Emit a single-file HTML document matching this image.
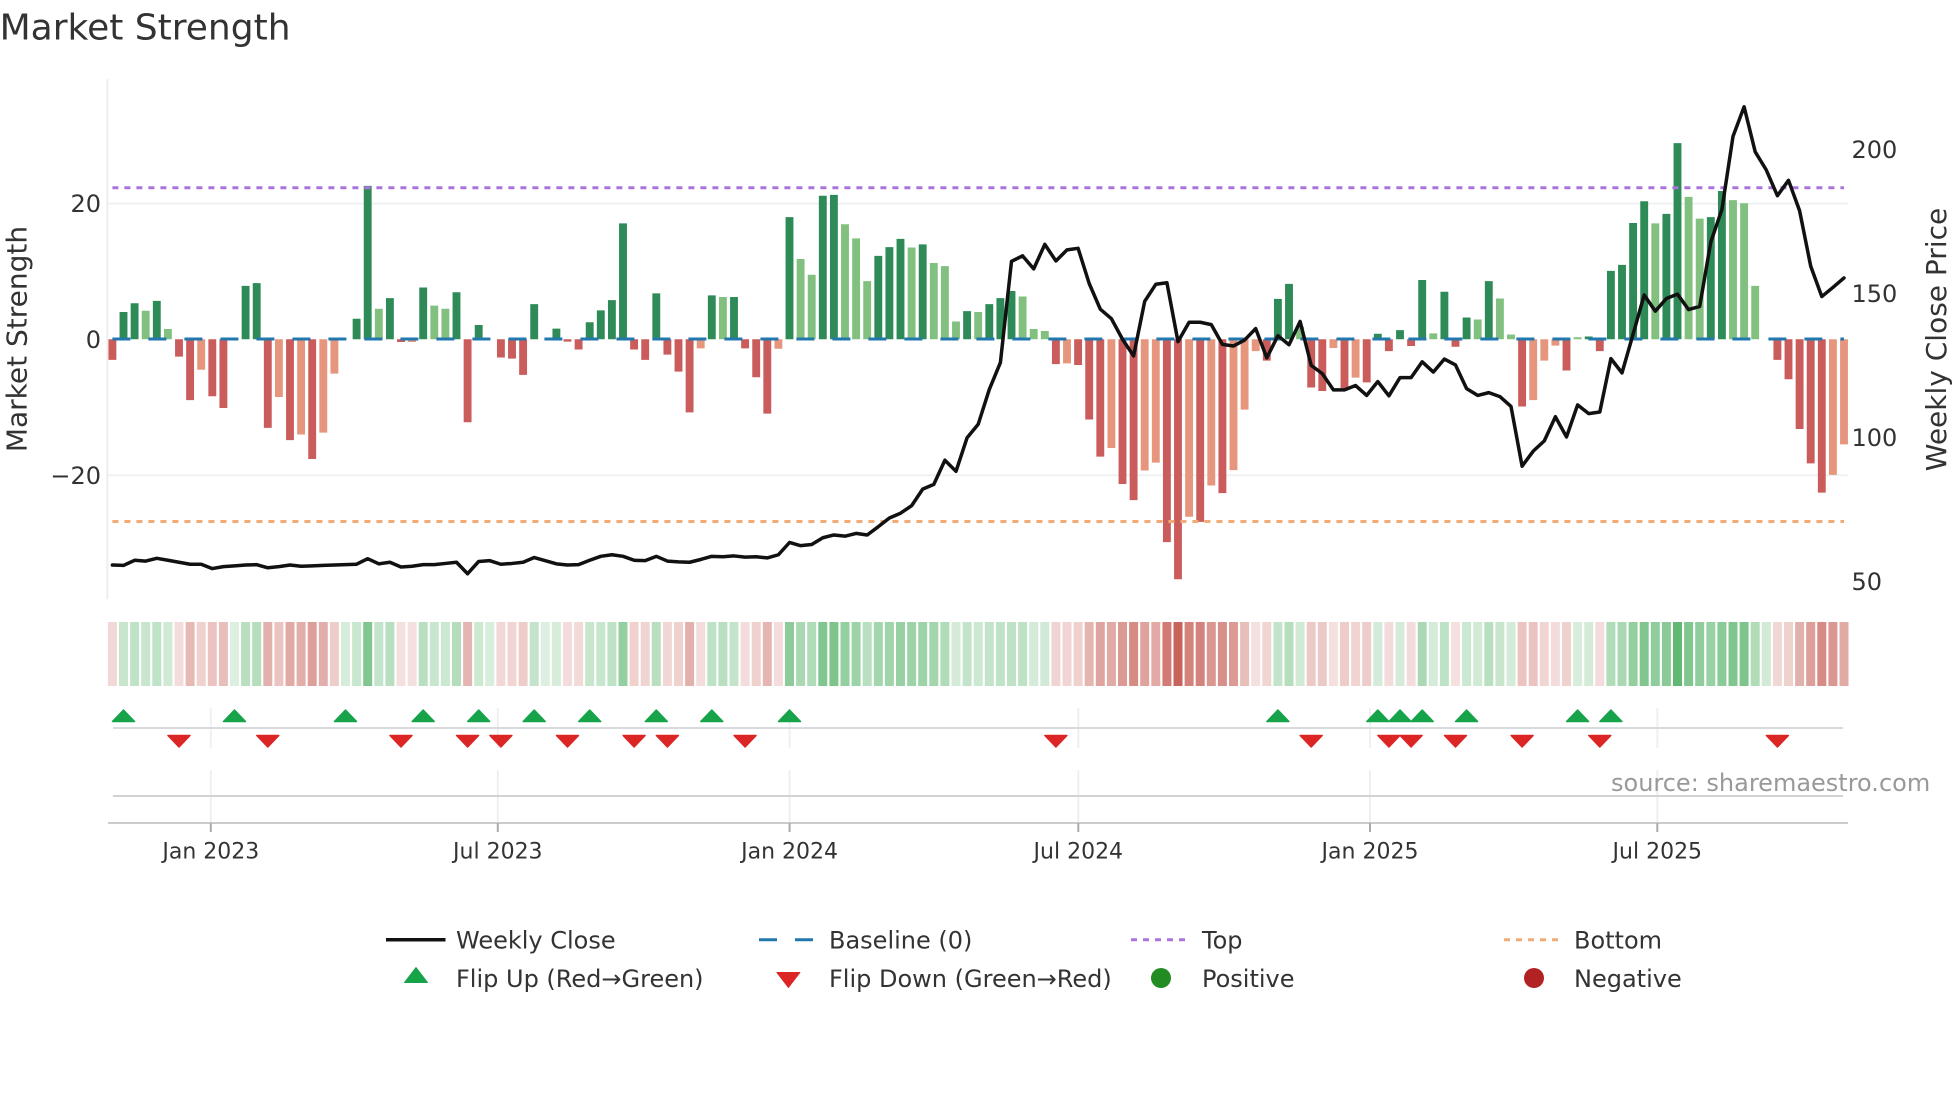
<!DOCTYPE html>
<html>
<head>
<meta charset="utf-8">
<title>Market Strength</title>
<style>
html,body{margin:0;padding:0;background:#fff;width:1960px;height:1102px;overflow:hidden}
svg{display:block}
text{font-family:"DejaVu Sans","Liberation Sans",sans-serif;fill:#333}
</style>
</head>
<body>
<svg width="1960" height="1102" viewBox="0 0 1960 1102" xmlns="http://www.w3.org/2000/svg">
<rect width="1960" height="1102" fill="#fff"/>

<!-- axis and grid -->
<path d="M107.3 79V599" stroke="#eeeeee" stroke-width="2" fill="none"/>
<path d="M107 203.6H1848M107 475.3H1848" stroke="#eff1f2" stroke-width="2" fill="none"/>

<!-- bars -->
<g transform="translate(112.4,0) scale(11.1,0.3954)" fill="none" stroke-width=".71">
<path stroke="#2e8b57" d="M1 858V789M2 858V767M4 858V761M12 858V723M13 858V716M22 858V806M23 858V470M25 858V754M28 858V727M31 858V739M33 858V822M38 858V769M40 858V831M43 858V815M44 858V785M45 858V759M46 858V565M49 858V742M54 858V747M56 858V751M61 858V549M64 858V495M65 858V493M69 858V647M70 858V625M71 858V604M73 858V618M77 858V787M79 858V769M80 858V754M81 858V736M105 858V756M106 858V718M114 858V844M116 858V835M118 858V708M120 858V738M122 858V803M124 858V711M133 858V851M135 858V685M136 858V670M137 858V564M138 858V509M140 858V541M141 858V362M144 858V549M145 858V483"/>
<path stroke="#81c07f" d="M3 858V786M5 858V832M24 858V781M29 858V773M30 858V781M55 858V751M62 858V655M63 858V695M66 858V567M67 858V603M68 858V711M72 858V626M74 858V665M75 858V673M76 858V813M78 858V789M82 858V750M83 858V832M84 858V837M107 858V826M119 858V843M123 858V808M125 858V755M126 858V846M132 858V853M139 858V565M142 858V498M143 858V553M146 858V506M147 858V514M148 858V723"/>
<path stroke="#ca5c5c" d="M0 858V910M6 858V902M7 858V1012M9 858V1002M10 858V1032M14 858V1082M16 858V1113M18 858V1161M26 858V865M32 858V1068M35 858V904M36 858V907M37 858V948M41 858V864M42 858V884M47 858V884M48 858V910M50 858V897M51 858V940M52 858V1043M57 858V881M58 858V954M59 858V1046M85 858V921M87 858V923M88 858V1061M89 858V1155M91 858V1224M92 858V1265M95 858V1371M96 858V1465M98 858V1320M100 858V1247M104 858V912M108 858V980M109 858V989M111 858V982M113 858V967M115 858V888M117 858V875M121 858V877M127 858V1028M131 858V937M134 858V888M150 858V910M151 858V959M152 858V1085M153 858V1172M154 858V1246"/>
<path stroke="#e6967c" d="M8 858V935M15 858V1004M17 858V1099M19 858V1094M20 858V945M27 858V865M53 858V881M60 858V882M86 858V919M90 858V1133M93 858V1190M94 858V1170M97 858V1307M99 858V1228M101 858V1189M102 858V1036M103 858V888M110 858V880M112 858V955M128 858V1012M129 858V912M130 858V874M155 858V1201M156 858V1124"/>
</g>

<!-- reference lines -->
<path d="M112.4 339H1844" stroke="#2277ae" stroke-width="3" stroke-dasharray="18 18" fill="none"/>
<path d="M112.4 187.8H1844" stroke="#a974dc" stroke-width="3" stroke-dasharray="6 6" fill="none"/>
<path d="M112.4 521.5H1844" stroke="#f0ab76" stroke-width="3" stroke-dasharray="6 6" fill="none"/>

<!-- price line -->
<g transform="translate(112.4,0) scale(11.1,0.3954)">
<polyline fill="none" stroke="#111111" stroke-width="3.5" stroke-linejoin="round" stroke-linecap="round" vector-effect="non-scaling-stroke" points="0,1429 1,1430 2,1417 3,1419 4,1412 5,1417 6,1422 7,1427 8,1427 9,1438 10,1433 11,1431 12,1429 13,1428 14,1436 15,1433 16,1429 17,1432 18,1431 19,1430 20,1429 21,1428 22,1427 23,1413 24,1426 25,1422 26,1434 27,1432 28,1428 29,1428 30,1425 31,1422 32,1451 33,1420 34,1418 35,1427 36,1425 37,1422 38,1410 39,1418 40,1426 41,1429 42,1428 43,1417 44,1407 45,1403 46,1407 47,1417 48,1418 49,1407 50,1419 51,1421 52,1422 53,1415 54,1407 55,1408 56,1406 57,1409 58,1408 59,1411 60,1403 61,1372 62,1380 63,1377 64,1360 65,1353 66,1356 67,1349 68,1353 69,1332 70,1310 71,1298 72,1279 73,1237 74,1225 75,1164 76,1192 77,1107 78,1073 79,985 80,917 81,661 82,647 83,680 84,618 85,660 86,632 87,628 88,717 89,782 90,806 91,858 92,900 93,762 94,719 95,715 96,864 97,815 98,815 99,821 100,871 101,875 102,860 103,831 104,905 105,849 106,872 107,813 108,924 109,945 110,986 111,986 112,975 113,1000 114,965 115,1001 116,955 117,955 118,915 119,941 120,908 121,923 122,983 123,1000 124,993 125,1003 126,1028 127,1179 128,1141 129,1115 130,1054 131,1105 132,1024 133,1046 134,1042 135,907 136,943 137,845 138,746 139,787 140,755 141,744 142,783 143,775 144,612 145,530 146,345 147,270 148,384 149,430 150,495 151,456 152,533 153,673 154,750 155,727 156,703"/>
</g>

<!-- heatmap strip -->
<g transform="translate(112.4,622) scale(11.1,64)" stroke-width=".81" fill="none">
<g stroke="#55b368" opacity=".93">
<path d="M1 0V1" opacity=".35"/><path d="M2 0V1" opacity=".4"/><path d="M3 0V1" opacity=".35"/><path d="M4 0V1" opacity=".4"/><path d="M5 0V1" opacity=".3"/><path d="M11 0V1" opacity=".22"/><path d="M12 0V1" opacity=".45"/><path d="M13 0V1" opacity=".48"/><path d="M21 0V1" opacity=".26"/><path d="M22 0V1" opacity=".34"/><path d="M23 0V1" opacity=".8"/><path d="M24 0V1" opacity=".38"/><path d="M25 0V1" opacity=".45"/><path d="M28 0V1" opacity=".45"/><path d="M29 0V1" opacity=".35"/><path d="M30 0V1" opacity=".33"/><path d="M31 0V1" opacity=".47"/><path d="M33 0V1" opacity=".32"/><path d="M34 0V1" opacity=".25"/><path d="M38 0V1" opacity=".38"/><path d="M39 0V1" opacity=".22"/><path d="M40 0V1" opacity=".26"/><path d="M43 0V1" opacity=".36"/><path d="M44 0V1" opacity=".35"/><path d="M45 0V1" opacity=".42"/><path d="M46 0V1" opacity=".68"/><path d="M49 0V1" opacity=".45"/><path d="M54 0V1" opacity=".42"/><path d="M55 0V1" opacity=".45"/><path d="M56 0V1" opacity=".38"/><path d="M61 0V1" opacity=".72"/><path d="M62 0V1" opacity=".55"/><path d="M63 0V1" opacity=".5"/><path d="M64 0V1" opacity=".8"/><path d="M65 0V1" opacity=".82"/><path d="M66 0V1" opacity=".68"/><path d="M67 0V1" opacity=".62"/><path d="M68 0V1" opacity=".45"/><path d="M69 0V1" opacity=".58"/><path d="M70 0V1" opacity=".6"/><path d="M71 0V1" opacity=".66"/><path d="M72 0V1" opacity=".62"/><path d="M73 0V1" opacity=".62"/><path d="M74 0V1" opacity=".58"/><path d="M75 0V1" opacity=".5"/><path d="M76 0V1" opacity=".28"/><path d="M77 0V1" opacity=".38"/><path d="M78 0V1" opacity=".33"/><path d="M79 0V1" opacity=".38"/><path d="M80 0V1" opacity=".4"/><path d="M81 0V1" opacity=".42"/><path d="M82 0V1" opacity=".42"/><path d="M83 0V1" opacity=".28"/><path d="M84 0V1" opacity=".3"/><path d="M105 0V1" opacity=".38"/><path d="M106 0V1" opacity=".48"/><path d="M107 0V1" opacity=".3"/><path d="M114 0V1" opacity=".27"/><path d="M116 0V1" opacity=".28"/><path d="M118 0V1" opacity=".52"/><path d="M119 0V1" opacity=".28"/><path d="M120 0V1" opacity=".42"/><path d="M122 0V1" opacity=".33"/><path d="M123 0V1" opacity=".3"/><path d="M124 0V1" opacity=".45"/><path d="M125 0V1" opacity=".35"/><path d="M126 0V1" opacity=".28"/><path d="M132 0V1" opacity=".25"/><path d="M133 0V1" opacity=".27"/><path d="M135 0V1" opacity=".5"/><path d="M136 0V1" opacity=".55"/><path d="M137 0V1" opacity=".68"/><path d="M138 0V1" opacity=".8"/><path d="M139 0V1" opacity=".7"/><path d="M140 0V1" opacity=".75"/><path d="M141 0V1"/><path d="M142 0V1" opacity=".8"/><path d="M143 0V1" opacity=".7"/><path d="M144 0V1" opacity=".65"/><path d="M145 0V1" opacity=".75"/><path d="M146 0V1" opacity=".8"/><path d="M147 0V1" opacity=".82"/><path d="M148 0V1" opacity=".5"/><path d="M149 0V1" opacity=".3"/>
</g>
<g stroke="#c4584f" opacity=".93">
<path d="M0 0V1" opacity=".25"/><path d="M6 0V1" opacity=".22"/><path d="M7 0V1" opacity=".45"/><path d="M8 0V1" opacity=".3"/><path d="M9 0V1" opacity=".38"/><path d="M10 0V1" opacity=".42"/><path d="M14 0V1" opacity=".5"/><path d="M15 0V1" opacity=".38"/><path d="M16 0V1" opacity=".55"/><path d="M17 0V1" opacity=".52"/><path d="M18 0V1" opacity=".62"/><path d="M19 0V1" opacity=".52"/><path d="M20 0V1" opacity=".32"/><path d="M26 0V1" opacity=".2"/><path d="M27 0V1" opacity=".2"/><path d="M32 0V1" opacity=".48"/><path d="M35 0V1" opacity=".25"/><path d="M36 0V1" opacity=".27"/><path d="M37 0V1" opacity=".33"/><path d="M41 0V1" opacity=".22"/><path d="M42 0V1" opacity=".23"/><path d="M47 0V1" opacity=".3"/><path d="M48 0V1" opacity=".28"/><path d="M50 0V1" opacity=".25"/><path d="M51 0V1" opacity=".3"/><path d="M52 0V1" opacity=".5"/><path d="M53 0V1" opacity=".22"/><path d="M57 0V1" opacity=".22"/><path d="M58 0V1" opacity=".3"/><path d="M59 0V1" opacity=".48"/><path d="M60 0V1" opacity=".22"/><path d="M85 0V1" opacity=".28"/><path d="M86 0V1" opacity=".27"/><path d="M87 0V1" opacity=".3"/><path d="M88 0V1" opacity=".48"/><path d="M89 0V1" opacity=".58"/><path d="M90 0V1" opacity=".55"/><path d="M91 0V1" opacity=".65"/><path d="M92 0V1" opacity=".75"/><path d="M93 0V1" opacity=".6"/><path d="M94 0V1" opacity=".55"/><path d="M95 0V1" opacity=".85"/><path d="M96 0V1"/><path d="M97 0V1" opacity=".8"/><path d="M98 0V1" opacity=".8"/><path d="M99 0V1" opacity=".68"/><path d="M100 0V1" opacity=".72"/><path d="M101 0V1" opacity=".65"/><path d="M102 0V1" opacity=".42"/><path d="M103 0V1" opacity=".2"/><path d="M104 0V1" opacity=".27"/><path d="M108 0V1" opacity=".35"/><path d="M109 0V1" opacity=".35"/><path d="M110 0V1" opacity=".2"/><path d="M111 0V1" opacity=".33"/><path d="M112 0V1" opacity=".28"/><path d="M113 0V1" opacity=".33"/><path d="M115 0V1" opacity=".22"/><path d="M117 0V1" opacity=".22"/><path d="M121 0V1" opacity=".2"/><path d="M127 0V1" opacity=".38"/><path d="M128 0V1" opacity=".38"/><path d="M129 0V1" opacity=".27"/><path d="M130 0V1" opacity=".22"/><path d="M131 0V1" opacity=".3"/><path d="M134 0V1" opacity=".22"/><path d="M150 0V1" opacity=".25"/><path d="M151 0V1" opacity=".3"/><path d="M152 0V1" opacity=".5"/><path d="M153 0V1" opacity=".62"/><path d="M154 0V1" opacity=".75"/><path d="M155 0V1" opacity=".68"/><path d="M156 0V1" opacity=".55"/>
</g>
</g>

<!-- flip rows grid -->
<path d="M210.8 708V748M497.8 708V748M789.6 708V748M1078.3 708V748M1370 708V748M1657.3 708V748M210.8 770V823M497.8 770V823M789.6 770V823M1078.3 770V823M1370 770V823M1657.3 770V823" stroke="#eef0f3" stroke-width="2" fill="none"/>
<path d="M113 728H1843" stroke="#d8dade" stroke-width="2" fill="none"/>
<path d="M113 796H1843" stroke="#d2d2d2" stroke-width="2" fill="none"/>
<path d="M108 823H1848" stroke="#cccccc" stroke-width="2" fill="none"/>
<path d="M210.8 823V832M497.8 823V832M789.6 823V832M1078.3 823V832M1370 823V832M1657.3 823V832" stroke="#aaaaaa" stroke-width="2" fill="none"/>

<!-- flips -->
<path fill="#16a34a" stroke="#16a34a" stroke-width="1.5" stroke-linejoin="round" d="M123.5 710l-11 11.5h22zM234.5 710l-11 11.5h22zM345.5 710l-11 11.5h22zM423.2 710l-11 11.5h22zM478.7 710l-11 11.5h22zM534.2 710l-11 11.5h22zM589.7 710l-11 11.5h22zM656.3 710l-11 11.5h22zM711.8 710l-11 11.5h22zM789.5 710l-11 11.5h22zM1277.9 710l-11 11.5h22zM1377.8 710l-11 11.5h22zM1400 710l-11 11.5h22zM1422.2 710l-11 11.5h22zM1466.6 710l-11 11.5h22zM1577.6 710l-11 11.5h22zM1610.9 710l-11 11.5h22z"/>
<path fill="#dc2626" stroke="#dc2626" stroke-width="1.5" stroke-linejoin="round" d="M179 747l-11 -11.5h22zM267.8 747l-11 -11.5h22zM401 747l-11 -11.5h22zM467.6 747l-11 -11.5h22zM500.9 747l-11 -11.5h22zM567.5 747l-11 -11.5h22zM634.1 747l-11 -11.5h22zM667.4 747l-11 -11.5h22zM745.1 747l-11 -11.5h22zM1055.9 747l-11 -11.5h22zM1311.2 747l-11 -11.5h22zM1388.9 747l-11 -11.5h22zM1411.1 747l-11 -11.5h22zM1455.5 747l-11 -11.5h22zM1522.1 747l-11 -11.5h22zM1599.8 747l-11 -11.5h22zM1777.4 747l-11 -11.5h22z"/>

<!-- text -->
<text x="-0.4" y="39.5" font-size="36">Market Strength</text>
<text transform="translate(26.5,339) rotate(-90)" text-anchor="middle" font-size="28">Market Strength</text>
<text transform="translate(1946,339.5) rotate(-90)" text-anchor="middle" font-size="28">Weekly Close Price</text>

<g font-size="24" text-anchor="end">
<text x="101" y="212">20</text>
<text x="101" y="348">0</text>
<text x="101" y="484">−20</text>
</g>
<g font-size="24">
<text x="1851.5" y="158">200</text>
<text x="1851.5" y="302">150</text>
<text x="1851.5" y="446">100</text>
<text x="1851.5" y="590">50</text>
</g>
<g font-size="22" text-anchor="middle">
<text x="210.8" y="858.5">Jan 2023</text>
<text x="497.8" y="858.5">Jul 2023</text>
<text x="789.6" y="858.5">Jan 2024</text>
<text x="1078.3" y="858.5">Jul 2024</text>
<text x="1370" y="858.5">Jan 2025</text>
<text x="1657.3" y="858.5">Jul 2025</text>
</g>
<text x="1611" y="791" font-size="24" style="fill:#999999">source: sharemaestro.com</text>

<!-- legend -->
<path d="M386 939.7H445.5" stroke="#111111" stroke-width="3.5" fill="none"/>
<path d="M759 939.7H813" stroke="#2277ae" stroke-width="3" stroke-dasharray="18 18" fill="none"/>
<path d="M1131 939.7H1186" stroke="#a974dc" stroke-width="3" stroke-dasharray="6 6" fill="none"/>
<path d="M1504 939.7H1559" stroke="#f0ab76" stroke-width="3" stroke-dasharray="6 6" fill="none"/>
<path d="M416 967.5L404.5 982.5H427.5Z" fill="#16a34a" stroke="#16a34a" stroke-width="1" stroke-linejoin="round"/>
<path d="M788.4 987.5L776.9 972.5H799.9Z" fill="#dc2626" stroke="#dc2626" stroke-width="1" stroke-linejoin="round"/>
<circle cx="1161" cy="978" r="10" fill="#228b22"/>
<circle cx="1534" cy="978" r="10" fill="#b22222"/>
<g font-size="24">
<text x="456" y="948.7">Weekly Close</text>
<text x="456" y="987">Flip Up (Red→Green)</text>
<text x="829" y="948.7">Baseline (0)</text>
<text x="829" y="987">Flip Down (Green→Red)</text>
<text x="1202" y="948.7">Top</text>
<text x="1202" y="987">Positive</text>
<text x="1574" y="948.7">Bottom</text>
<text x="1574" y="987">Negative</text>
</g>
</svg>
</body>
</html>
